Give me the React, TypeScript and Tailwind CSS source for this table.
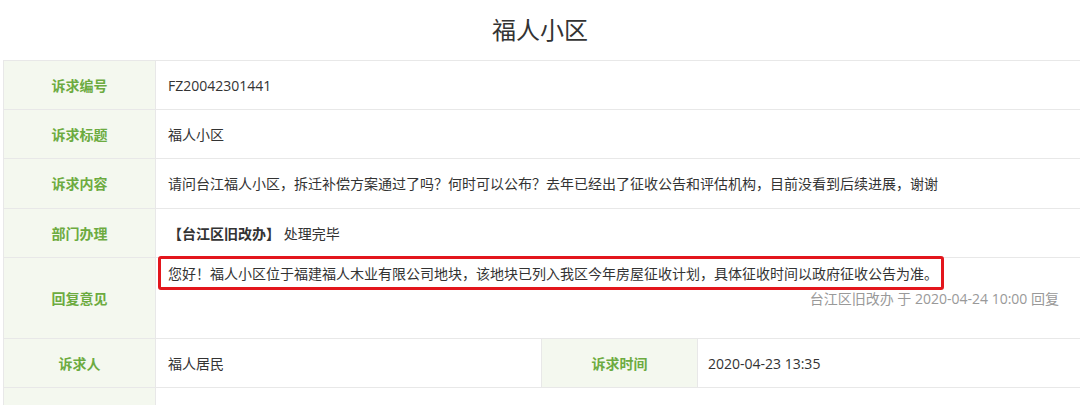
const FONT = "font-['Open_Sans','Noto_Sans_CJK_SC',sans-serif]";

function Label({ children, h }: { children: React.ReactNode; h: string }) {
  return (
    <td
      className={`${h} border border-[#e8e8e8] bg-[#f4f8ef] text-center align-middle text-[14px] font-bold text-[#6cab40]`}
    >
      {children}
    </td>
  );
}

function Value({
  children,
  colSpan,
}: {
  children: React.ReactNode;
  colSpan?: number;
}) {
  return (
    <td
      colSpan={colSpan}
      className="border border-[#e8e8e8] bg-white pl-[12px] align-middle text-[14px] text-[#333]"
    >
      {children}
    </td>
  );
}

export default function App() {
  return (
    <div className={`${FONT} h-[405px] w-[1080px] overflow-hidden bg-white`}>
      <h1 className="flex h-[60px] items-center justify-center pb-[1px] text-[24px] font-normal text-[#333]">
        福人小区
      </h1>
      <div className="pl-[3px]">
        <table className="w-[1090px] table-fixed border-collapse">
          <colgroup>
            <col className="w-[152px]" />
            <col className="w-[386px]" />
            <col className="w-[156px]" />
            <col />
          </colgroup>
          <tbody>
            <tr>
              <Label h="h-[49px]">诉求编号</Label>
              <Value colSpan={3}>FZ20042301441</Value>
            </tr>
            <tr>
              <Label h="h-[49px]">诉求标题</Label>
              <Value colSpan={3}>福人小区</Value>
            </tr>
            <tr>
              <Label h="h-[50px]">诉求内容</Label>
              <Value colSpan={3}>
                请问台江福人小区，拆迁补偿方案通过了吗？何时可以公布？去年已经出了征收公告和评估机构，目前没看到后续进展，谢谢
              </Value>
            </tr>
            <tr>
              <Label h="h-[49px]">部门办理</Label>
              <Value colSpan={3}>
                <span className="font-bold">【台江区旧改办】</span> 处理完毕
              </Value>
            </tr>
            <tr>
              <Label h="h-[81px]">回复意见</Label>
              <td
                colSpan={3}
                className="border border-[#e8e8e8] bg-white p-0 align-top text-[14px] text-[#333]"
              >
                <div className="relative mt-[-2px] ml-[2px] flex h-[34px] w-[786px] items-center rounded-[3px] border-[3px] border-[#e3161c] pl-[7px]">
                  您好！福人小区位于福建福人木业有限公司地块，该地块已列入我区今年房屋征收计划，具体征收时间以政府征收公告为准。
                </div>
                <div className="mt-[-1px] pr-[33px] text-right text-[14px] leading-[20px] text-[#999]">
                  台江区旧改办 于 2020-04-24 10:00 回复
                </div>
              </td>
            </tr>
            <tr>
              <Label h="h-[49px]">诉求人</Label>
              <Value>福人居民</Value>
              <Label h="h-[49px]">诉求时间</Label>
              <td className="border border-[#e8e8e8] bg-white pl-[10px] align-middle text-[14px] text-[#333]">
                2020-04-23 13:35
              </td>
            </tr>
            <tr>
              <Label h="h-[49px]">诉求类型</Label>
              <Value colSpan={3}>咨询</Value>
            </tr>
          </tbody>
        </table>
      </div>
    </div>
  );
}
